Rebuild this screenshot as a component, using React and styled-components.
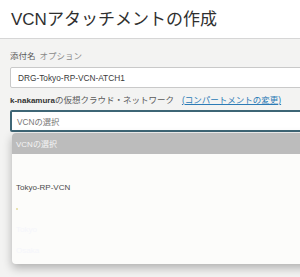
import React from "react";
import styled, { createGlobalStyle } from "styled-components";

const GlobalStyle = createGlobalStyle`
  body {
    margin: 0;
    background: #f3f3f2;
    font-family: "Liberation Sans", "Noto Sans CJK JP", sans-serif;
    overflow: hidden;
  }
`;

const Page = styled.div`
  width: 300px;
  height: 277px;
  overflow: hidden;
`;

const Header = styled.div`
  height: 39px;
  background: #ffffff;
  border-bottom: 1px solid #d6d6d6;
  display: flex;
  align-items: center;
  padding: 0 0 3px 11px;
  box-sizing: border-box;
`;

const Title = styled.h1`
  margin: 0;
  font-size: 17px;
  font-weight: 400;
  color: #2f2f2f;
  white-space: nowrap;
`;

const Form = styled.div`
  padding: 11px 0 0 10px;
  width: 420px;
`;

const Field = styled.div`
  display: flex;
  flex-direction: column;
  margin-bottom: ${(p) => p.$gap || 0}px;
`;

const Label = styled.div`
  font-size: 8.5px;
  line-height: 12px;
  color: #5a5a5a;
  white-space: nowrap;
  margin-bottom: ${(p) => p.$gap}px;

  b {
    color: #333;
    font-weight: 700;
    font-size: 8px;
  }
`;

const Hint = styled.span`
  color: #8a8a8a;
  margin-left: 4px;
`;

const Link = styled.a`
  color: #2c7bb6;
  text-decoration: underline;
  margin-left: 8px;
`;

const Input = styled.div`
  height: 21px;
  box-sizing: border-box;
  background: #ffffff;
  border: 1px solid #c9c9c9;
  border-radius: 2px;
  display: flex;
  align-items: center;
  padding-left: 7px;
  font-size: 8.3px;
  color: #3a3a3a;
`;

const SelectWrap = styled.div`
  position: relative;
`;

const Select = styled(Input)`
  height: 22px;
  border: 2px solid #3e6676;
  padding-left: 5px;
  color: #777;
`;

const Dropdown = styled.div`
  position: absolute;
  top: 23px;
  left: 2px;
  right: 0;
  height: 131px;
  background: #fcfcfa;
  border-radius: 4px;
  box-shadow: 0 4px 10px rgba(0, 0, 0, 0.28);
  overflow: hidden;
`;

const Option = styled.div`
  height: ${(p) => p.$h || 21}px;
  display: flex;
  align-items: center;
  padding-left: 4px;
  font-size: 8px;
  background: ${(p) => (p.$active ? "#bcbcbc" : "transparent")};
  color: ${(p) => (p.$active ? "#f4f4f4" : p.$faint ? "#f5f6fb" : "#4a4a4a")};
`;

const Dot = styled.span`
  width: 2px;
  height: 2px;
  background: #e8e2b0;
`;

export default function App() {
  return (
    <Page>
      <GlobalStyle />
      <Header>
        <Title>VCNアタッチメントの作成</Title>
      </Header>
      <Form>
        <Field $gap={6}>
          <Label $gap={5}>
            添付名<Hint>オプション</Hint>
          </Label>
          <Input>DRG-Tokyo-RP-VCN-ATCH1</Input>
        </Field>
        <Field>
          <Label $gap={3}>
            <b>k-nakamura</b>の仮想クラウド・ネットワーク
            <Link>(コンパートメントの変更)</Link>
          </Label>
          <SelectWrap>
            <Select>VCNの選択</Select>
            <Dropdown>
              <Option $active>VCNの選択</Option>
              <Option $h={23} />
              <Option>Tokyo-RP-VCN</Option>
              <Option>
                <Dot />
              </Option>
              <Option $faint>Tokyo</Option>
              <Option $faint>Osaka</Option>
            </Dropdown>
          </SelectWrap>
        </Field>
      </Form>
    </Page>
  );
}
